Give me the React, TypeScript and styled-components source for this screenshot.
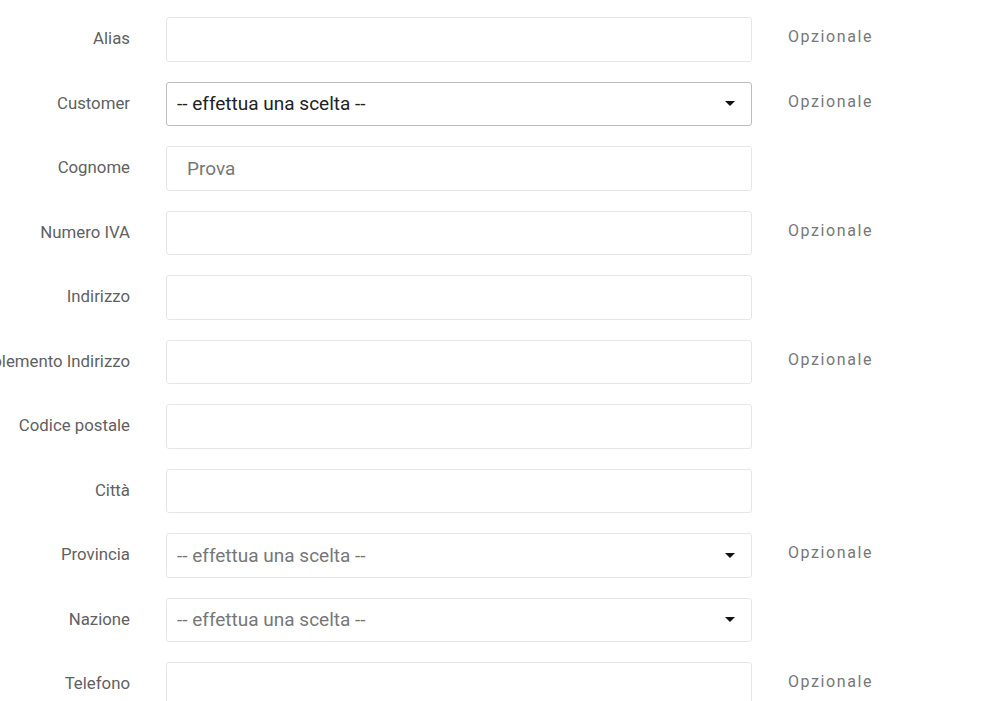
import React from "react";
import styled, { createGlobalStyle } from "styled-components";

const Global = createGlobalStyle`
  html, body { margin: 0; padding: 0; background: #fff; }
  body { font-family: Roboto, "Liberation Sans", sans-serif; overflow: hidden; }
`;

const Form = styled.div`
  display: flex;
  flex-direction: column;
  gap: 20px;
  padding-top: 17px;
`;

const Row = styled.div`
  display: grid;
  grid-template-columns: 130px 586px auto;
  column-gap: 36px;
  align-items: start;
`;

const Label = styled.div`
  display: flex;
  justify-content: flex-end;
  align-items: center;
  height: 42px;
  white-space: nowrap;
  font-size: 16.8px;
  color: #616161;
`;

const Field = styled.div<{ $active?: boolean }>`
  box-sizing: border-box;
  height: 44.5px;
  border: 1px solid ${(p) => (p.$active ? "#bdbdbd" : "#e6e6e6")};
  border-radius: 3px;
  background: #fff;
  display: flex;
  align-items: center;
  justify-content: space-between;
  padding: 0 16px 0 10px;
`;

const Value = styled.span<{ $dark?: boolean; $indent?: boolean }>`
  font-size: 19px;
  color: ${(p) => (p.$dark ? "#222" : "#777")};
  padding-left: ${(p) => (p.$indent ? "10px" : "0")};
`;

const Caret = styled.span`
  width: 0;
  height: 0;
  border-left: 5px solid transparent;
  border-right: 5px solid transparent;
  border-top: 5px solid #111;
`;

const Hint = styled.div`
  padding-top: 10px;
  font-size: 16px;
  line-height: 20px;
  letter-spacing: 1.6px;
  color: #777;
`;

type F = {
  label: string;
  kind: "text" | "select";
  value?: string;
  optional?: boolean;
  active?: boolean;
};

const fields: F[] = [
  { label: "Alias", kind: "text", optional: true },
  { label: "Customer", kind: "select", optional: true, active: true },
  { label: "Cognome", kind: "text", value: "Prova" },
  { label: "Numero IVA", kind: "text", optional: true },
  { label: "Indirizzo", kind: "text" },
  { label: "Complemento Indirizzo", kind: "text", optional: true },
  { label: "Codice postale", kind: "text" },
  { label: "Città", kind: "text" },
  { label: "Provincia", kind: "select", optional: true },
  { label: "Nazione", kind: "select" },
  { label: "Telefono", kind: "text", optional: true },
];

export default function App() {
  return (
    <>
      <Global />
      <Form>
        {fields.map((f) => (
          <Row key={f.label}>
            <Label>{f.label}</Label>
            <Field $active={f.active}>
              {f.kind === "select" ? (
                <>
                  <Value $dark={f.active}>-- effettua una scelta --</Value>
                  <Caret />
                </>
              ) : (
                <Value $indent>{f.value ?? ""}</Value>
              )}
            </Field>
            {f.optional ? <Hint>Opzionale</Hint> : <span />}
          </Row>
        ))}
      </Form>
    </>
  );
}
